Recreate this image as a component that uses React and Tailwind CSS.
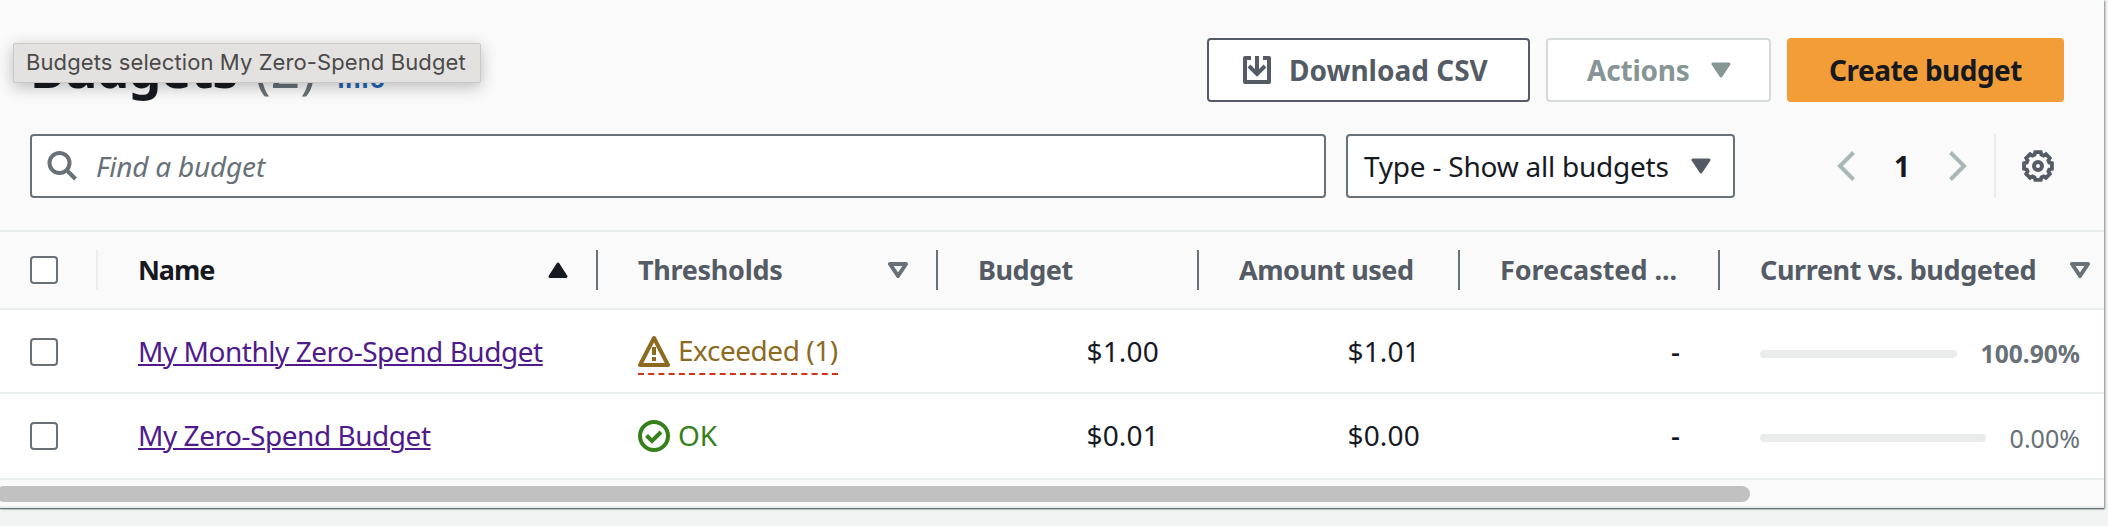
import React from "react";

function Caret({ className, up, hollow }) {
  return (
    <svg viewBox="0 0 20 16" className={className} aria-hidden="true">
      {up ? (
        <path d="M10 2 L18 14.5 H2 Z" fill="currentColor" stroke="currentColor" strokeWidth="3" strokeLinejoin="round" />
      ) : (
        <path d="M2 2 H18 L10 14 Z" fill={hollow ? "none" : "currentColor"} stroke="currentColor" strokeWidth={hollow ? 4 : 3} strokeLinejoin="round" />
      )}
    </svg>
  );
}

function Checkbox() {
  return <span className="block h-7 w-7 shrink-0 rounded-[4px] border-2 border-[#687078] bg-white" />;
}

function Chevron({ flip }) {
  return (
    <svg viewBox="0 0 18 30" className="h-[30px] w-[18px] shrink-0" fill="none" stroke="#aab7b8" strokeWidth="4">
      <path d={flip ? "M1.5 1.5 L15 15 L1.5 28.5" : "M16.5 1.5 L3 15 L16.5 28.5"} />
    </svg>
  );
}

// Eight shallow teeth: each contributes two outer corners and two valley corners.
const gearPoints = Array.from({ length: 8 })
  .flatMap((_, i) =>
    [[-11, 14.2], [11, 14.2], [17, 11.8], [28, 11.8]].map(([offset, r]) => {
      const a = ((i * 45 + offset - 90) * Math.PI) / 180;
      return `${(16 + r * Math.cos(a)).toFixed(2)},${(16 + r * Math.sin(a)).toFixed(2)}`;
    })
  )
  .join(" ");

function GearIcon() {
  return (
    <svg viewBox="0 0 32 32" className="h-8 w-8 shrink-0" fill="none" stroke="#545b64">
      <polygon points={gearPoints} strokeWidth="3.8" />
      <circle cx="16" cy="16" r="4" strokeWidth="4" />
    </svg>
  );
}

function HeaderCell({ children, className = "", divider = "border-[#687078]" }) {
  return (
    <div className={`flex h-10 items-center border-r-2 ${divider} ${className}`}>{children}</div>
  );
}

const cols = "grid grid-cols-[98px_500px_340px_261px_261px_260px_384px] items-center";

function Row({ name, status, budget, used, bar, percent, percentClass, className }) {
  return (
    <div className={`${cols} border-b-2 border-[#eaeded] bg-white ${className}`}>
      <div className="pl-[30px]"><Checkbox /></div>
      <div className="pb-0.5 pl-10">
        <a className="tracking-[-0.46px] text-[#4f1a8c] underline decoration-2 underline-offset-[2px]">{name}</a>
      </div>
      <div className="pb-0.5 pl-10">{status}</div>
      <div className="pr-10 pb-0.5 text-right tracking-[0.2px]">{budget}</div>
      <div className="pr-10 pb-0.5 text-right tracking-[0.2px]">{used}</div>
      <div className="pr-10 pb-0.5 text-right font-medium">-</div>
      <div className="flex items-center pt-1 pr-6 pl-10">
        <span className={`h-2 rounded-full bg-[#eaecec] ${bar}`} />
        <span className={`ml-auto leading-8 text-[#687078] ${percentClass}`}>{percent}</span>
      </div>
    </div>
  );
}

export default function App() {
  return (
    <div className="relative h-[526px] w-[2108px] overflow-hidden bg-[#f2f3f3] font-['Noto_Sans',sans-serif] text-[28px] leading-10 whitespace-nowrap text-[#16191f]">
      <main className="h-[508px] w-[2104px] bg-[#fafafa] shadow-[0_1px_1px_0_#687078,1px_1px_2px_0_#879596]">
        <header className="flex h-[102px] items-end justify-between pr-10 pl-[30px]">
          <h1 className="flex h-[64px] items-baseline pt-[10px] text-[52px] font-bold">
            <span className="w-[225px] tracking-[-0.9px]">Budgets</span>
            <span className="w-[82px] font-normal text-[#687078]">(2)</span>
            <a className="font-['Open_Sans',sans-serif] text-[24px] font-bold text-[#1f66b5]">Info</a>
          </h1>
          <div className="flex gap-4 font-bold">
            <button className="flex h-16 w-[323px] items-center rounded-[4px] border-2 border-[#545b64] bg-white pl-[34px] text-[#545b64]">
              <svg viewBox="0 0 28 28" className="h-7 w-7" fill="none" stroke="currentColor" strokeWidth="4">
                <path d="M8 2 H2 V26 H26 V2 H20" strokeLinejoin="round" />
                <path d="M14 0 V18" />
                <path d="M6 10 L14 18 L22 10" />
              </svg>
              <span className="ml-[18px]">Download CSV</span>
            </button>
            <button className="flex h-16 w-[225px] items-center rounded-[4px] border-2 border-[#d5dbdb] bg-white pl-[39px] text-[#879596]">
              <span className="tracking-[-0.2px]">Actions</span>
              <Caret className="ml-[21px] h-4 w-5" />
            </button>
            <button className="h-16 w-[277px] rounded-[4px] bg-[#f29d38] tracking-[-0.53px]">Create budget</button>
          </div>
        </header>

        <section className="mt-8 flex h-16 pl-[30px]">
          <div className="flex w-[1296px] items-center rounded-[4px] border-2 border-[#687078] bg-white pl-[15px] text-[#687078]">
            <svg viewBox="0 0 30 30" className="h-[30px] w-[30px]" fill="none" stroke="currentColor" strokeWidth="4">
              <circle cx="12.5" cy="12" r="10" />
              <path d="M19.5 19 L28.5 28" />
            </svg>
            <span className="ml-[19px] tracking-[-0.2px] italic">Find a budget</span>
          </div>
          <div className="ml-5 flex w-[389px] items-center rounded-[4px] border-2 border-[#687078] bg-white pl-4">
            <span className="tracking-[-0.23px]">Type - Show all budgets</span>
            <Caret className="mr-[22px] ml-auto h-4 w-5 text-[#545b64]" />
          </div>
          <nav className="ml-[102px] flex items-center">
            <Chevron />
            <span className="w-[94px] text-center font-bold">1</span>
            <Chevron flip />
            <span className="ml-[27px] h-16 w-0.5 bg-[#eaeded]" />
            <span className="ml-[26px]"><GearIcon /></span>
          </nav>
        </section>

        <section className="mt-8">
          <div className={`${cols} h-20 border-y-2 border-[#eaeded] text-[27px] font-bold text-[#545b64]`}>
            <HeaderCell className="pl-[30px]" divider="border-[#eaeded]"><Checkbox /></HeaderCell>
            <HeaderCell className="justify-between pr-7 pl-10 text-[#16191f]">
              <span className="tracking-[-1.1px]">Name</span>
              <Caret up className="h-4 w-5" />
            </HeaderCell>
            <HeaderCell className="justify-between pr-7 pl-10">
              <span className="tracking-[-0.3px]">Thresholds</span>
              <Caret hollow className="h-4 w-5 text-[#687078]" />
            </HeaderCell>
            <HeaderCell className="pl-10"><span className="tracking-[-0.45px]">Budget</span></HeaderCell>
            <HeaderCell className="pl-10"><span className="tracking-[-0.5px]">Amount used</span></HeaderCell>
            <HeaderCell className="pl-10"><span className="tracking-[-0.05px]">Forecasted ...</span></HeaderCell>
            <div className="flex h-10 items-center justify-between pr-3.5 pl-10">
              <span className="tracking-[-0.4px]">Current vs. budgeted</span>
              <Caret hollow className="h-4 w-5 text-[#687078]" />
            </div>
          </div>
          <Row
            className="h-[84px] pt-0.5"
            name="My Monthly Zero-Spend Budget"
            status={
              <span className="flex h-12 w-fit items-center border-b-2 border-dashed border-[#d13212] pt-0.5 text-[#8d6a1f]">
                <svg viewBox="0 0 32 32" className="h-8 w-8" fill="none" stroke="currentColor" strokeWidth="4" strokeLinejoin="round">
                  <path d="M16 3 L30 30 H2 Z" />
                  <path d="M16 12 V20 M16 22 V26" />
                </svg>
                <span className="mb-0.5 ml-2 tracking-[-0.45px]">Exceeded (1)</span>
              </span>
            }
            budget="$1.00"
            used="$1.01"
            bar="w-[197px]"
            percent="100.90%"
            percentClass="font-bold text-[24.6px]"
          />
          <Row
            className="h-[86px]"
            name="My Zero-Spend Budget"
            status={
              <span className="flex items-center text-[#35801a]">
                <svg viewBox="0 0 32 32" className="mt-0.5 h-8 w-8" fill="none" stroke="currentColor" strokeWidth="4">
                  <circle cx="16" cy="16" r="14" />
                  <path d="M8.5 15.5 L14 21 L23 12" />
                </svg>
                <span className="ml-2">OK</span>
              </span>
            }
            budget="$0.01"
            used="$0.00"
            bar="w-[226px]"
            percent="0.00%"
            percentClass="text-[25px]"
          />
          <div className="flex h-[28px] items-start border-b-2 border-[#eaeded] pt-1.5">
            <div className="-ml-1 h-4 w-[1754px] rounded-full bg-[#c1c1c1]" />
          </div>
        </section>
      </main>

      <div className="absolute top-[43px] left-[13px] flex h-10 w-[468px] items-center rounded-[2px] border border-[#c9c8c7] bg-[#e3e2e0] pb-0.5 pl-3 font-['Inter',sans-serif] text-[22px] text-[#4b4a49] shadow-[0_4px_16px_rgba(0,0,0,0.25)]">
        <span className="tracking-[0.1px]">Budgets selection My Zero-Spend Budget</span>
      </div>
    </div>
  );
}
